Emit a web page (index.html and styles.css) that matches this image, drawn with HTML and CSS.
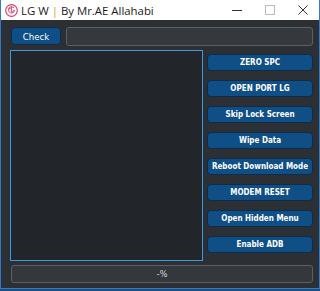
FILE: index.html
```html
<!DOCTYPE html>
<html lang="en">
<head>
  <meta charset="UTF-8" />
  <title>LG W | By Mr.AE Allahabi</title>
  <link rel="stylesheet" href="styles.css">
</head>
<body>
  <div class="window">
    <div class="titlebar">
      <svg class="logo" width="13" height="13" viewBox="0 0 13 13">
        <circle cx="6.5" cy="6.5" r="5.8" fill="none" stroke="#d9436a" stroke-width="1.2"/>
        <circle cx="4.6" cy="4.4" r="0.9" fill="#d9436a"/>
        <path d="M6.4 2.6v5.2h1.6" fill="none" stroke="#d9436a" stroke-width="1"/>
        <path d="M9.6 6.4h-1.6M9.6 6.4a3.1 3.1 0 1 1 -0.6 -2.4" fill="none" stroke="#d9436a" stroke-width="1"/>
      </svg>
      <span class="title">LG W <span class="bar">|</span> By Mr.AE Allahabi</span>
      <div class="controls">
        <span class="ctl">
          <svg width="10" height="10" viewBox="0 0 10 10"><path d="M0 5.5h10" stroke="#333" stroke-width="1"/></svg>
        </span>
        <span class="ctl">
          <svg width="10" height="10" viewBox="0 0 10 10"><rect x="0.5" y="0.5" width="9" height="9" fill="none" stroke="#bbb" stroke-width="1"/></svg>
        </span>
        <span class="ctl">
          <svg width="10" height="10" viewBox="0 0 10 10"><path d="M0.5 0.5l9 9M9.5 0.5l-9 9" stroke="#333" stroke-width="1"/></svg>
        </span>
      </div>
    </div>

    <div class="content">
      <div class="top-row">
        <button class="btn check">Check</button>
        <div class="field"></div>
      </div>

      <div class="main">
        <div class="log"></div>
        <div class="actions">
          <button class="btn">ZERO SPC</button>
          <button class="btn">OPEN PORT LG</button>
          <button class="btn">Skip Lock Screen</button>
          <button class="btn">Wipe Data</button>
          <button class="btn">Reboot Download Mode</button>
          <button class="btn">MODEM RESET</button>
          <button class="btn">Open Hidden Menu</button>
          <button class="btn">Enable ADB</button>
        </div>
      </div>

      <div class="status">-%</div>
    </div>
  </div>
</body>
</html>
```

FILE: styles.css
```css
body { margin: 0; background: #1d4f80; width: 320px; height: 291px; overflow: hidden; }
.window {
  width: 318px;
  height: 288px;
  border: 1px solid #2f7cc4;
  border-top: none;
  background: #2c2f34;
  display: flex;
  flex-direction: column;
}
.titlebar {
  height: 20px;
  background: #fff;
  display: flex;
  align-items: center;
  font-family: "Open Sans", "Noto Sans", sans-serif;
  font-size: 11.4px;
  color: #1a1a1a;
}
.logo { margin-left: 4px; margin-right: 3px; }
.bar { color: #d9a21b; }
.controls { margin-left: auto; display: flex; }
.ctl { width: 33px; height: 20px; display: flex; align-items: center; justify-content: center; }

.content { flex: 1; display: flex; flex-direction: column; padding: 7px 6px 6px 9px; gap: 4px; }
.top-row { display: flex; gap: 5px; height: 19px; margin-left: 1px; }
.field {
  flex: 1;
  background: #35383d;
  border: 1px solid #5c5f63;
  border-radius: 3px;
}

.btn {
  font-family: "DejaVu Sans Condensed", "DejaVu Sans", sans-serif;
  font-stretch: condensed;
  font-weight: bold;
  font-size: 8px;
  white-space: nowrap;
  color: #fff;
  background: #104e86;
  border: 1px solid #0b2c4a;
  border-radius: 4px;
  padding: 0;
  height: 18px;
  cursor: pointer;
}
.check { width: 50px; font-weight: normal; font-size: 9.5px; }

.main { display: flex; gap: 4px; height: 211px; }
.log {
  flex: 0 0 auto;
  width: 191px;
  background: #222529;
  border: 1px solid #3b9be0;
}
.actions { flex: 1; min-width: 0; display: flex; flex-direction: column; gap: 9px; padding-top: 4px; }
.actions .btn { height: 17px; }

.status {
  margin-left: 1px;
  height: 16px;
  border: 1px solid #5c5f63;
  border-radius: 3px;
  background: #34373c;
  color: #ddd;
  font-family: "DejaVu Sans", sans-serif;
  font-size: 8px;
  display: flex;
  align-items: center;
  justify-content: center;
}
```
